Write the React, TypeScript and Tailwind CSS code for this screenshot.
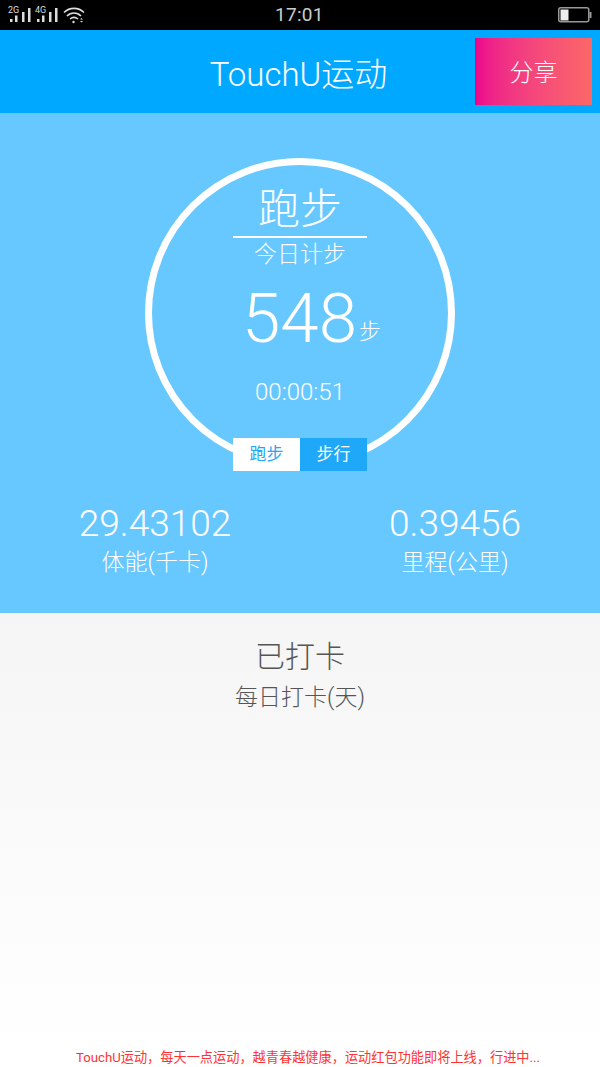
const fontStack = "font-['Roboto','Noto_Sans_CJK_SC',sans-serif]"

function SignalBars({ label }: { label: string }) {
  return (
    <div className="relative h-[16px] w-[24px]">
      <span className="absolute top-[-2px] left-0 text-[9px] leading-[10px] text-[#ddd]">{label}</span>
      <svg viewBox="0 0 24 16" className="absolute inset-0 h-[16px] w-[24px]" fill="#ddd">
        <rect x="2" y="12" width="2.500" height="3" />
        <rect x="7" y="8.500" width="2.500" height="6.500" />
        <rect x="14" y="5" width="2.500" height="10" />
        <rect x="20" y="1" width="2.500" height="14" />
      </svg>
    </div>
  )
}

function StatusBar() {
  return (
    <div className="relative flex h-[30px] items-center justify-between bg-black px-[8px]">
      <div className="flex items-center gap-[3px]">
        <SignalBars label="2G" />
        <SignalBars label="4G" />
        <svg viewBox="0 0 22 18" className="ml-[1px] h-[18px] w-[22px]" fill="none" stroke="#ddd" strokeWidth="1.600">
          <path d="M1 6.500C6.500 1 15.500 1 21 6.500" />
          <path d="M4 10C8 6 14 6 18 10" />
          <path d="M7 13C9.500 11 12.500 11 15 13" />
          <circle cx="10.500" cy="16" r="1.200" fill="#ddd" stroke="none" />
          <path d="M17 13.500l1.500-1.500 1.500 1.500zM17 15l1.500 1.500 1.500-1.500z" fill="#ddd" stroke="none" />
        </svg>
      </div>
      <span className="absolute left-[275px] text-[19px] tracking-[0.3px] text-[#ccc]">17:01</span>
      <svg viewBox="0 0 34 16" className="h-[16px] w-[34px]">
        <rect x="0.750" y="0.750" width="30" height="14" rx="2" fill="none" stroke="#999" strokeWidth="1.500" />
        <rect x="2.500" y="2.500" width="8" height="11" fill="#eee" />
        <rect x="31.500" y="5" width="2" height="6" fill="#999" />
      </svg>
    </div>
  )
}

function Stat({ value, label }: { value: string; label: string }) {
  return (
    <div className="flex w-[200px] flex-col items-center text-white">
      <span className="text-[37px] leading-[42px] font-light">{value}</span>
      <span className="text-[23px] leading-[36px] font-light">{label}</span>
    </div>
  )
}

export default function App() {
  return (
    <div className={`flex h-[1067px] w-[600px] flex-col overflow-hidden ${fontStack}`}>
      <StatusBar />

      {/* Header */}
      <header className="relative flex h-[83px] items-center justify-center bg-[#00a9ff]">
        <h1 className="mt-[7px] mr-[3px] text-[33px] font-light text-white">TouchU运动</h1>
        <button className="absolute top-[8px] right-[8px] h-[67px] w-[117px] bg-gradient-to-r from-[#ec008c] to-[#fc6767] pt-[3px] text-[24px] font-light text-white">
          分享
        </button>
      </header>

      {/* Main panel */}
      <section className="flex h-[500px] flex-col items-center bg-[#66c8ff]">
        <div className="relative mt-[45px] flex h-[310px] w-[310px] flex-col items-center rounded-full border-[7px] border-white text-white">
          <div className="mt-[19px] text-[42px] leading-[52px] font-light">跑步</div>
          <div className="h-[2px] w-[134px] bg-white" />
          <div className="mt-[1px] text-[23px] leading-[32px] font-light">今日计步</div>
          <div className="mt-[11px] ml-[23px] flex items-end">
            <span className="text-[69px] leading-[74px] font-light">548</span>
            <span className="mb-[9px] ml-[2px] text-[22px] leading-[30px] font-light">步</span>
          </div>
          <div className="mt-[20px] text-[24px] leading-[32px] font-light">00:00:51</div>
          <div className="absolute bottom-[-10px] left-1/2 flex h-[33px] w-[134px] -translate-x-1/2 text-[17px]">
            <span className="flex w-[67px] items-center justify-center bg-white text-[#1fa8f7]">跑步</span>
            <span className="flex w-[67px] items-center justify-center bg-[#1fa8f7] text-white">步行</span>
          </div>
        </div>
        <div className="mt-[35px] flex w-[600px] justify-between pr-[45px] pl-[55px]">
          <Stat value="29.43102" label="体能(千卡)" />
          <Stat value="0.39456" label="里程(公里)" />
        </div>
      </section>

      {/* Check-in */}
      <section className="flex flex-1 flex-col items-center bg-gradient-to-b from-[#f5f5f5] to-white">
        <div className="mt-[23px] text-[30px] leading-[42px] font-light text-[#555]">已打卡</div>
        <div className="mt-[2px] text-[23px] leading-[36px] font-light text-[#555]">每日打卡(天)</div>
        <p className="mt-auto ml-[16px] mb-[0px] text-[13.200px] leading-[18px] text-[#f33]">
          TouchU运动，每天一点运动，越青春越健康，运动红包功能即将上线，行进中...
        </p>
      </section>
    </div>
  )
}
